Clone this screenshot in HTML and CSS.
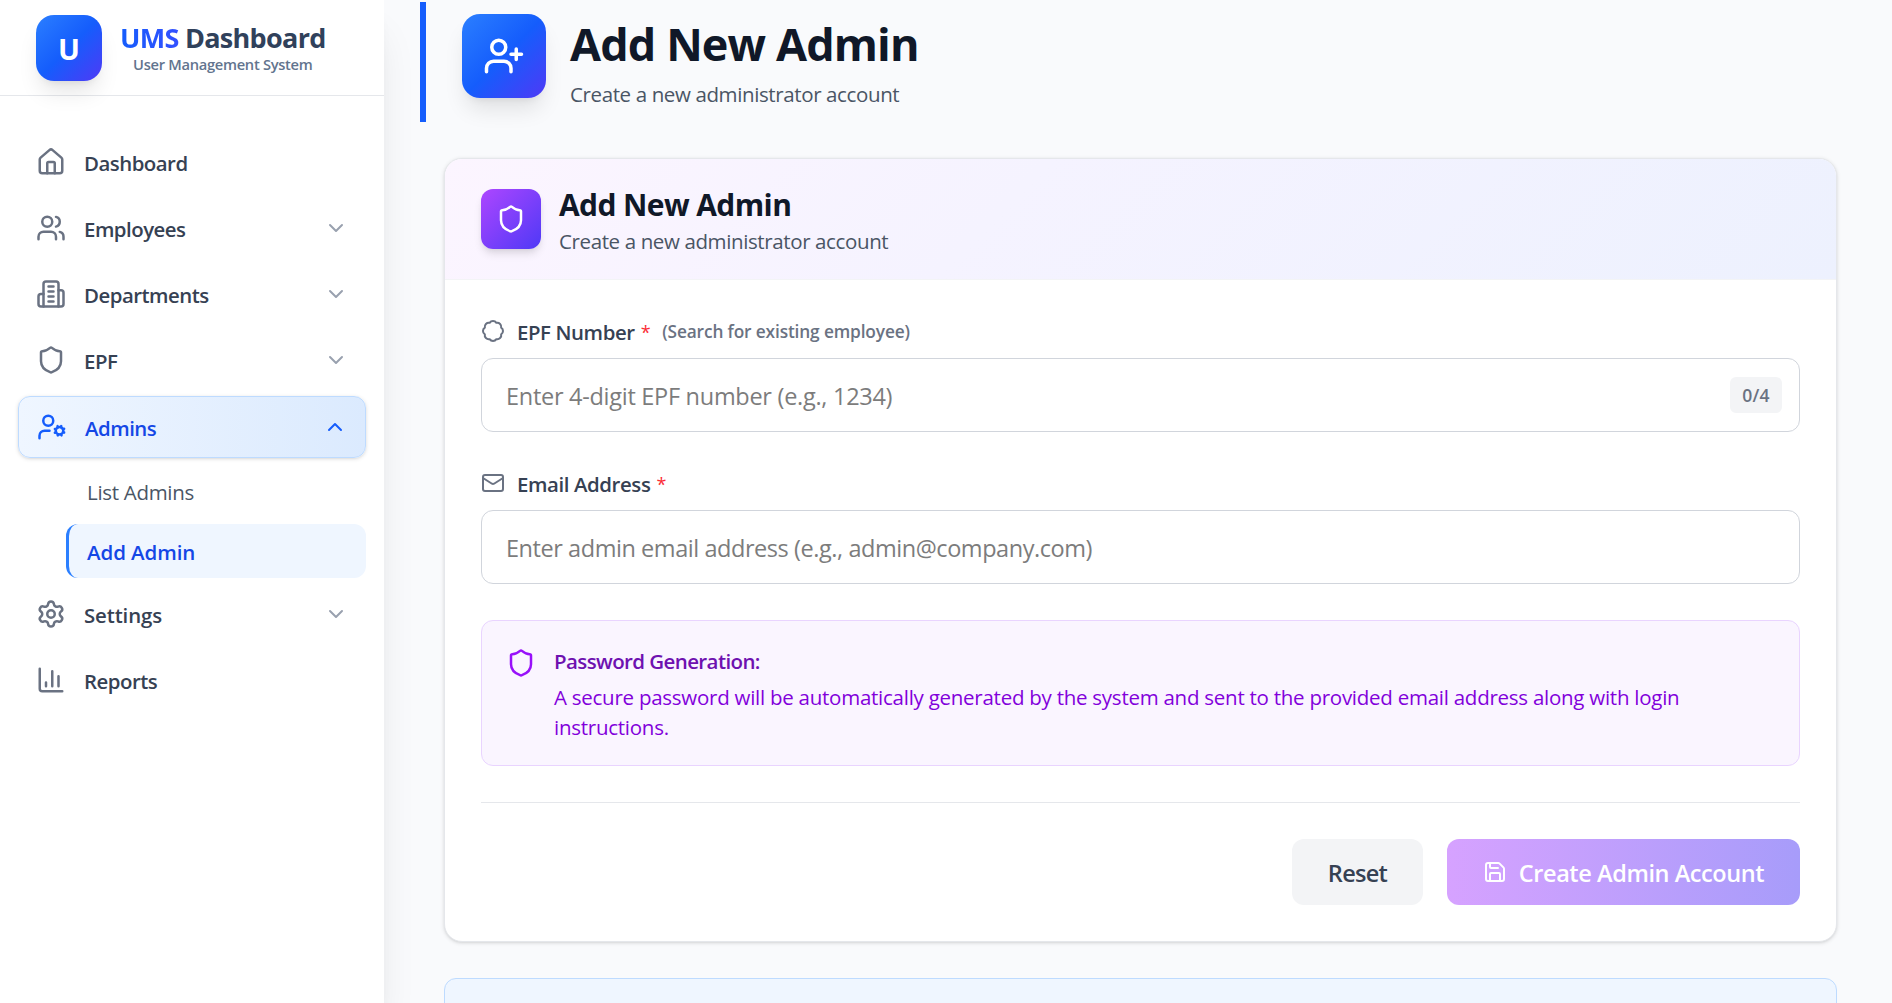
FILE: index.html
```html
<!DOCTYPE html>
<html lang="en">
<head>
<meta charset="utf-8">
<title>UMS Dashboard - Add New Admin</title>
<link rel="stylesheet" href="styles.css">
</head>
<body>
<svg class="defs" aria-hidden="true">
  <symbol id="chevron" viewBox="0 0 24 24"><path d="m6 9 6 6 6-6"/></symbol>
  <symbol id="shield" viewBox="0 0 24 24"><path d="M20 13c0 5-3.5 7.5-7.66 8.95a1 1 0 0 1-.67-.01C7.5 20.5 4 18 4 13V6a1 1 0 0 1 1-1c2 0 4.5-1.2 6.24-2.72a1.17 1.17 0 0 1 1.52 0C14.51 3.81 17 5 19 5a1 1 0 0 1 1 1z"/></symbol>
</svg>
<div class="app">
  <aside class="sidebar">
    <div class="brand">
      <div class="logo">U</div>
      <div class="brand-text">
        <div class="brand-name"><span class="brand-accent">UMS</span> Dashboard</div>
        <div class="brand-sub">User Management System</div>
      </div>
    </div>
    <nav class="nav">
      <a class="item">
        <svg class="icon" viewBox="0 0 24 24"><path d="M15 21v-8a1 1 0 0 0-1-1h-4a1 1 0 0 0-1 1v8"/><path d="M3 10a2 2 0 0 1 .709-1.528l7-5.999a2 2 0 0 1 2.582 0l7 5.999A2 2 0 0 1 21 10v9a2 2 0 0 1-2 2H5a2 2 0 0 1-2-2z"/></svg>
        <span class="label">Dashboard</span>
      </a>
      <a class="item">
        <svg class="icon" viewBox="0 0 24 24"><path d="M16 21v-2a4 4 0 0 0-4-4H6a4 4 0 0 0-4 4v2"/><path d="M16 3.128a4 4 0 0 1 0 7.744"/><path d="M22 21v-2a4 4 0 0 0-3-3.87"/><circle cx="9" cy="7" r="4"/></svg>
        <span class="label">Employees</span>
        <svg class="chev"><use href="#chevron"/></svg>
      </a>
      <a class="item">
        <svg class="icon" viewBox="0 0 24 24"><path d="M6 22V4a2 2 0 0 1 2-2h8a2 2 0 0 1 2 2v18Z"/><path d="M6 12H4a2 2 0 0 0-2 2v6a2 2 0 0 0 2 2h2"/><path d="M18 9h2a2 2 0 0 1 2 2v9a2 2 0 0 1-2 2h-2"/><path d="M10 6h4M10 10h4M10 14h4M10 18h4"/></svg>
        <span class="label">Departments</span>
        <svg class="chev"><use href="#chevron"/></svg>
      </a>
      <a class="item">
        <svg class="icon"><use href="#shield"/></svg>
        <span class="label">EPF</span>
        <svg class="chev"><use href="#chevron"/></svg>
      </a>
      <a class="item active">
        <svg class="icon" viewBox="0 0 24 24"><circle cx="18" cy="15" r="3"/><circle cx="9" cy="7" r="4"/><path d="M10 15H6a4 4 0 0 0-4 4v2"/><path d="m21.7 16.4-.9-.3M15.2 13.9l-.9-.3M16.6 18.7l.3-.9M19.1 12.2l.3-.9M19.6 18.7l-.4-1M16.8 12.3l-.4-1M14.3 16.6l1-.4M20.7 13.8l1-.4"/></svg>
        <span class="label">Admins</span>
        <svg class="chev up"><use href="#chevron"/></svg>
      </a>
      <div class="submenu">
        <a class="subitem">List Admins</a>
        <a class="subitem current">Add Admin</a>
      </div>
      <a class="item">
        <svg class="icon" viewBox="0 0 24 24"><path d="M9.671 4.136a2.34 2.34 0 0 1 4.659 0 2.34 2.34 0 0 0 3.319 1.915 2.34 2.34 0 0 1 2.33 4.033 2.34 2.34 0 0 0 0 3.831 2.34 2.34 0 0 1-2.33 4.033 2.34 2.34 0 0 0-3.319 1.915 2.34 2.34 0 0 1-4.659 0 2.34 2.34 0 0 0-3.32-1.915 2.34 2.34 0 0 1-2.33-4.033 2.34 2.34 0 0 0 0-3.831A2.34 2.34 0 0 1 6.35 6.051a2.34 2.34 0 0 0 3.319-1.915"/><circle cx="12" cy="12" r="3"/></svg>
        <span class="label settings">Settings</span>
        <svg class="chev"><use href="#chevron"/></svg>
      </a>
      <a class="item">
        <svg class="icon" viewBox="0 0 24 24"><path d="M3 3v16a2 2 0 0 0 2 2h16"/><path d="M18 17V9M13 17V5M8 17v-3"/></svg>
        <span class="label">Reports</span>
      </a>
    </nav>
  </aside>

  <main class="main">
    <header class="page-head">
      <div class="page-icon">
        <svg viewBox="0 0 24 24"><path d="M16 21v-2a4 4 0 0 0-4-4H6a4 4 0 0 0-4 4v2"/><circle cx="9" cy="7" r="4"/><path d="M19 8v6M22 11h-6"/></svg>
      </div>
      <div>
        <h1 class="page-title">Add New Admin</h1>
        <p class="page-sub">Create a new administrator account</p>
      </div>
    </header>

    <div class="content">
      <section class="card">
        <div class="card-head">
          <div class="card-icon"><svg><use href="#shield"/></svg></div>
          <div>
            <h2 class="card-title">Add New Admin</h2>
            <p class="card-sub">Create a new administrator account</p>
          </div>
        </div>
        <form class="card-body">
          <div class="field">
            <label class="field-label" for="epf">
              <svg viewBox="0 0 24 24"><path d="M3.85 8.62a4 4 0 0 1 4.78-4.77 4 4 0 0 1 6.74 0 4 4 0 0 1 4.78 4.78 4 4 0 0 1 0 6.74 4 4 0 0 1-4.77 4.78 4 4 0 0 1-6.75 0 4 4 0 0 1-4.78-4.77 4 4 0 0 1 0-6.76Z"/></svg>
              <span>EPF Number</span><span class="req">*</span><span class="hint">(Search for existing employee)</span>
            </label>
            <div class="control">
              <input class="epf" id="epf" type="text" placeholder="Enter 4-digit EPF number (e.g., 1234)">
              <span class="counter">0/4</span>
            </div>
          </div>
          <div class="field">
            <label class="field-label" for="email">
              <svg viewBox="0 0 24 24"><path d="m22 7-8.991 5.727a2 2 0 0 1-2.009 0L2 7"/><rect x="2" y="4" width="20" height="16" rx="2"/></svg>
              <span>Email Address</span><span class="req">*</span>
            </label>
            <div class="control">
              <input id="email" type="text" placeholder="Enter admin email address (e.g., admin@company.com)">
            </div>
          </div>
          <div class="notice">
            <svg><use href="#shield"/></svg>
            <div>
              <p class="notice-title">Password Generation:</p>
              <p class="notice-text">A secure password will be automatically generated by the system and sent to the provided email address along with login instructions.</p>
            </div>
          </div>
          <div class="actions">
            <button type="button" class="btn reset">Reset</button>
            <button type="button" class="btn create">
              <svg viewBox="0 0 24 24"><path d="M15.2 3a2 2 0 0 1 1.4.6l3.8 3.8a2 2 0 0 1 .6 1.4V19a2 2 0 0 1-2 2H5a2 2 0 0 1-2-2V5a2 2 0 0 1 2-2z"/><path d="M17 21v-7a1 1 0 0 0-1-1H8a1 1 0 0 0-1 1v7"/><path d="M7 3v4a1 1 0 0 0 1 1h7"/></svg>
              <span>Create Admin Account</span>
            </button>
          </div>
        </form>
      </section>
      <section class="info"></section>
    </div>
  </main>
</div>
</body>
</html>
```

FILE: styles.css
```css
* { box-sizing: border-box; }

body {
  margin: 0;
  font-family: "Open Sans", "Noto Sans", sans-serif;
  color: #101828;
  background: #f9fafc;
  overflow: hidden;
}

h1, h2, p { margin: 0; }

svg {
  display: block;
  flex: none;
  fill: none;
  stroke: currentColor;
  stroke-width: 2;
  stroke-linecap: round;
  stroke-linejoin: round;
}

.defs { position: absolute; width: 0; height: 0; }

.app { display: flex; height: 1003px; overflow: hidden; }

/* Sidebar */
.sidebar {
  width: 384px;
  flex: none;
  background: #fff;
  position: relative;
  z-index: 1;
  box-shadow: 0 30px 38px -8px rgba(0, 0, 0, .1), 0 12px 15px -9px rgba(0, 0, 0, .1);
}

.brand {
  height: 96px;
  display: flex;
  gap: 18px;
  padding: 15px 36px 0;
  border-bottom: 1px solid #e5e7eb;
}

.logo {
  width: 66px;
  height: 66px;
  border-radius: 18px;
  display: flex;
  align-items: center;
  justify-content: center;
  color: #fff;
  font-size: 29px;
  font-weight: 700;
  background: linear-gradient(135deg, #2b7fff, #155dfc 50%, #4f39f6);
  box-shadow: 0 15px 22px -4px rgba(0, 0, 0, .1), 0 6px 9px -6px rgba(0, 0, 0, .1);
}

.brand-text { padding-top: 6px; text-align: center; white-space: nowrap; }

.brand-name {
  font-size: 27px;
  line-height: 33px;
  font-weight: 700;
  letter-spacing: -.7px;
  color: #30415b;
}

.brand-accent {
  color: transparent;
  background: linear-gradient(90deg, #155dfc, #3350ff);
  background-clip: text;
  -webkit-background-clip: text;
}

.brand-sub {
  margin-top: 1px;
  font-size: 14.7px;
  line-height: 18px;
  font-weight: 550;
  letter-spacing: -.3px;
  color: #62748e;
}

.nav { display: flex; flex-direction: column; gap: 6px; padding: 36px 18px; }

.item {
  display: flex;
  align-items: center;
  gap: 18px;
  height: 60px;
  padding: 0 18px;
  color: #364153;
  font-size: 20.4px;
  font-weight: 570;
  letter-spacing: -.5px;
}

.item .icon { width: 30px; height: 30px; color: #6a7282; }
.label { flex: 1; padding-top: 2px; }
.label.settings { letter-spacing: -.12px; }
.chev { width: 24px; height: 24px; color: #99a1af; }
.chev.up { transform: rotate(180deg); }

.item.active {
  height: 62px;
  border: 1px solid #bedbff;
  border-radius: 12px;
  color: #1447e6;
  background: linear-gradient(90deg, #eff6ff, #dbeafe);
  box-shadow: 0 1px 4px rgba(0, 0, 0, .12), 0 1px 3px -1px rgba(0, 0, 0, .1);
}

.item.active .icon, .item.active .chev { color: #155dfc; }

.submenu { display: flex; flex-direction: column; gap: 6px; margin-left: 48px; }

.subitem {
  height: 54px;
  display: flex;
  align-items: center;
  padding: 2px 18px 0;
  border-left: 3px solid transparent;
  border-radius: 12px;
  font-size: 20.5px;
  letter-spacing: -.3px;
  color: #4a5565;
}

.subitem.current {
  border-left-color: #2b7fff;
  background: #eff6ff;
  color: #1447e6;
  font-weight: 570;
  letter-spacing: -.08px;
}

/* Main column */
.main { flex: 1; padding: 2px 36px 0; }

.page-head {
  height: 120px;
  display: flex;
  gap: 24px;
  padding: 12px 36px;
  border-left: 6px solid #155dfc;
}

.page-icon {
  width: 84px;
  height: 84px;
  border-radius: 18px;
  display: grid;
  place-items: center;
  color: #fff;
  background: linear-gradient(135deg, #2b7fff, #155dfc 50%, #4f39f6);
  box-shadow: 0 15px 22px -4px rgba(0, 0, 0, .1), 0 6px 9px -6px rgba(0, 0, 0, .1);
}

.page-icon svg { width: 42px; height: 42px; }

.page-title { font-size: 45px; line-height: 60px; font-weight: 700; letter-spacing: -.88px; }

.page-sub, .card-sub {
  font-size: 20.5px;
  line-height: 30px;
  letter-spacing: -.38px;
  color: #4a5565;
}

.page-sub { margin-top: 5px; }

.content { margin: 36px 19px 0 24px; }

.card {
  background: #fff;
  border: 1px solid #e5e7eb;
  border-radius: 18px;
  overflow: hidden;
  box-shadow: 0 1px 4px rgba(0, 0, 0, .12), 0 1px 3px -1px rgba(0, 0, 0, .1);
}

.card-head {
  display: flex;
  align-items: center;
  gap: 18px;
  height: 121px;
  padding: 2px 36px 0;
  border-bottom: 1px solid #f3f4f6;
  background: linear-gradient(135deg, #fcf5ff, #f5f3ff 40%, #edf1fe);
}

.card-icon {
  width: 60px;
  height: 60px;
  margin-top: -2px;
  border-radius: 12px;
  display: grid;
  place-items: center;
  color: #fff;
  background: linear-gradient(135deg, #ad46ff, #4f39f6);
  box-shadow: 0 6px 9px -1px rgba(0, 0, 0, .1), 0 3px 6px -3px rgba(0, 0, 0, .1);
}

.card-icon svg, .notice svg { width: 30px; height: 30px; }

.card-title { font-size: 30px; line-height: 42px; font-weight: 700; letter-spacing: -.6px; }

.card-body { padding: 36px; }

.field { margin-bottom: 36px; }

.field-label {
  display: flex;
  align-items: center;
  height: 30px;
  margin-bottom: 12px;
  font-size: 20.4px;
  font-weight: 570;
  letter-spacing: -.4px;
  color: #364153;
}

.field-label svg { width: 24px; height: 24px; margin-right: 12px; color: #6a7282; }
.field-label span { padding-top: 2px; }
.field-label .req { margin-left: 6px; font-size: 18px; font-weight: 500; color: #fb2c36; }
.field-label .hint { margin-left: 12px; font-size: 17.3px; letter-spacing: -.14px; color: #6a7282; padding-top: 0; }

.control {
  display: flex;
  align-items: center;
  height: 74px;
  padding: 0 17px 0 24px;
  border: 1px solid #d1d5dc;
  border-radius: 12px;
  background: #fff;
}

input {
  flex: 1;
  min-width: 0;
  border: 0;
  padding: 2px 0 0;
  outline: 0;
  background: transparent;
  font: 400 23.5px "Open Sans", sans-serif;
  letter-spacing: -.44px;
}

input.epf { letter-spacing: -.28px; }
input::placeholder { color: #7c7c7c; }

.counter {
  width: 52px;
  height: 36px;
  border-radius: 6px;
  display: grid;
  place-items: center;
  font-size: 17.5px;
  font-weight: 550;
  letter-spacing: .3px;
  color: #6a7282;
  background: #f3f4f6;
}

.notice {
  display: flex;
  gap: 18px;
  padding: 24px;
  border: 1px solid #e9d4ff;
  border-radius: 12px;
  background: #faf5ff;
  color: #8200db;
  font-size: 20.5px;
  line-height: 30px;
}

.notice svg { margin-top: 3px; color: #9810fa; }

.notice-title {
  margin-bottom: 6px;
  padding-top: 1px;
  height: 30px;
  font-weight: 600;
  letter-spacing: -.6px;
  color: #6e11b0;
}

.notice-text { padding-top: 1px; margin-bottom: -1px; letter-spacing: -.255px; }

.actions {
  display: flex;
  justify-content: flex-end;
  gap: 24px;
  margin-top: 36px;
  padding-top: 36px;
  border-top: 1px solid #e5e7eb;
}

.btn {
  height: 66px;
  border: 0;
  border-radius: 12px;
  display: flex;
  align-items: center;
  justify-content: center;
  gap: 12px;
  padding: 0;
  font: 600 23.5px "Open Sans", sans-serif;
  white-space: nowrap;
}

.btn svg { width: 24px; height: 24px; }
.btn span { padding-top: 2px; }
.btn.reset { width: 131px; padding-top: 2px; background: #f3f4f6; color: #364153; letter-spacing: -.7px; }
.btn.create { width: 353px; color: #fff; letter-spacing: -.42px; background: linear-gradient(90deg, #d6a2ff, #a79cfa); }

.info {
  height: 160px;
  margin-top: 36px;
  border: 1px solid #bedbff;
  border-radius: 12px;
  background: #eff6ff;
}
```
